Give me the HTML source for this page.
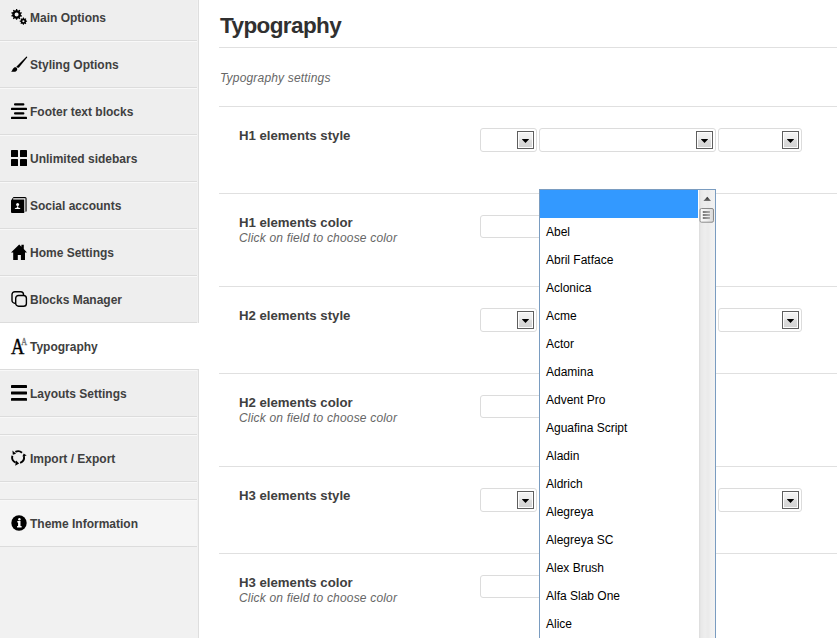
<!DOCTYPE html>
<html><head><meta charset="utf-8">
<style>
*{margin:0;padding:0;box-sizing:border-box}
html,body{width:837px;height:638px;overflow:hidden;background:#fff;font-family:"Liberation Sans",sans-serif;color:#333}
#side{position:absolute;left:0;top:0;width:199px;height:638px;background:#f1f1f1;border-right:1px solid #dedede}
.it{position:absolute;left:0;width:197px;height:47px;background:#eee;border-top:1px solid #f8f8f8;border-bottom:1px solid #dcdcdc}
.it span{position:absolute;left:30px;top:16px;font-size:12px;font-weight:bold;color:#404040;line-height:15px;white-space:nowrap}
.it svg{position:absolute;left:11px;top:14px;overflow:visible}
.it.sel{background:#fff;border-top-color:#fff;width:199px}
.it.hov{background:#f5f5f5}
.band{position:absolute;left:0;width:197px;height:18px;background:#f1f1f1;border-top:1px solid #f8f8f8;border-bottom:1px solid #dcdcdc}
#main{position:absolute;left:219px;top:0;width:618px;height:638px}
h1{position:absolute;left:1px;top:13px;font-size:22.5px;letter-spacing:-0.6px;font-weight:bold;color:#303030;line-height:26px;white-space:nowrap}
.hr{position:absolute;left:0;width:618px;height:1px;background:#e0e0e0}
.desc{position:absolute;left:1px;top:71px;font-size:12px;letter-spacing:0.18px;font-style:italic;color:#666;line-height:15px;white-space:nowrap}
.lab{position:absolute;left:20px;font-size:13.2px;font-weight:bold;color:#404040;line-height:15px;white-space:nowrap}
.sub{position:absolute;left:20px;font-size:12px;letter-spacing:0.18px;font-style:italic;color:#666;line-height:15px;white-space:nowrap}

.sbox{position:absolute;height:24px;border:1px solid #dcdcdc;border-radius:3px;background:#fff}
.btn{position:absolute;right:2px;top:2px;width:17px;height:18px;border:1px solid #5e5e5e;background:#fdfdfd}
.btn:before{content:"";position:absolute;left:1px;top:1px;right:1px;bottom:1px;background:linear-gradient(#f3f3f3 0,#ececec 45%,#dcdcdc 50%,#d4d4d4 100%)}
.btn:after{content:"";position:absolute;left:3.7px;top:6.9px;width:7.6px;height:4.2px;background:#000;clip-path:polygon(0 0,100% 0,50% 100%)}
.inp{position:absolute;height:23px;border:1px solid #dcdcdc;border-radius:3px;background:#fff}
#list{position:absolute;left:539px;top:189px;width:177px;height:460px;border:1px solid #7a9cc0;background:#fff;overflow:hidden}
#list .o{position:absolute;left:6px;font-size:12px;color:#000;line-height:15px;white-space:nowrap}
#list .hi{position:absolute;left:0;top:0;width:158px;height:28px;background:#3399ff}
#sb{position:absolute;left:159px;top:0;width:16px;height:460px;background:linear-gradient(90deg,#dcdcdc 0,#e8e8e8 2px,#eeeeee 6px,#eaeaea 9px,#f0f0f0 12px,#f2f2f2 16px)}
</style></head><body>
<div id="side">
  <div class="it" style="top:-6px"><svg width="16" height="16" viewBox="0 0 16 16"><path fill-rule="evenodd" d="M4.85,1.17 L5.05,-0.07 L6.19,-0.07 L6.38,1.17 L7.48,1.53 L8.37,0.65 L9.29,1.32 L8.72,2.44 L9.39,3.38 L10.63,3.18 L10.98,4.27 L9.86,4.83 L9.86,5.99 L10.97,6.57 L10.62,7.65 L9.38,7.45 L8.70,8.38 L9.26,9.50 L8.34,10.17 L7.46,9.28 L6.35,9.63 L6.15,10.87 L5.01,10.87 L4.82,9.63 L3.72,9.27 L2.83,10.15 L1.91,9.48 L2.48,8.36 L1.81,7.42 L0.57,7.62 L0.22,6.53 L1.34,5.97 L1.34,4.81 L0.23,4.23 L0.58,3.15 L1.82,3.35 L2.50,2.42 L1.94,1.30 L2.86,0.63 L3.74,1.52Z M7.60,5.40 A2.0,2.0 0 1 0 3.60,5.40 A2.0,2.0 0 1 0 7.60,5.40Z M11.79,9.47 L11.94,8.53 L12.89,8.53 L13.03,9.47 L13.90,9.84 L14.67,9.28 L15.34,9.96 L14.78,10.72 L15.13,11.59 L16.07,11.74 L16.07,12.69 L15.13,12.83 L14.76,13.70 L15.32,14.47 L14.64,15.14 L13.88,14.58 L13.01,14.93 L12.86,15.87 L11.91,15.87 L11.77,14.93 L10.90,14.56 L10.13,15.12 L9.46,14.44 L10.02,13.68 L9.67,12.81 L8.73,12.66 L8.73,11.71 L9.67,11.57 L10.04,10.70 L9.48,9.93 L10.16,9.26 L10.92,9.82Z M13.45,12.20 A1.05,1.05 0 1 0 11.35,12.20 A1.05,1.05 0 1 0 13.45,12.20Z"/></svg><span>Main Options</span></div>
  <div class="it" style="top:41px"><svg width="16" height="16" viewBox="0 0 16 16"><path d="M15.5,0.4 Q16.5,0.5 16.1,1.5 L8,11.6 Q6.5,12.3 5.3,10.7 Z"/><path d="M5,11.3 C6.4,12.1 6.8,13.8 5.4,15 C4.2,16 1.6,15.9 0,15.6 C1.2,14.9 1.3,13.5 2.2,12.5 C3,11.5 4.1,10.9 5,11.3 Z"/></svg><span>Styling Options</span></div>
  <div class="it" style="top:88px"><svg width="16" height="16" viewBox="0 0 16 16"><rect x="3" y="0.2" width="10.4" height="2.3" rx="1"/><rect x="0" y="4.8" width="16" height="2.3" rx="0.6"/><rect x="3" y="9.3" width="10.4" height="2.3" rx="1"/><rect x="0" y="13.8" width="16" height="2.3" rx="0.6"/></svg><span>Footer text blocks</span></div>
  <div class="it" style="top:135px"><svg width="16" height="16" viewBox="0 0 16 16"><rect x="0" y="0" width="7" height="7" rx="0.6"/><rect x="9" y="0" width="7" height="7" rx="0.6"/><rect x="0" y="9" width="7" height="7" rx="0.6"/><rect x="9" y="9" width="7" height="7" rx="0.6"/></svg><span>Unlimited sidebars</span></div>
  <div class="it" style="top:182px"><svg width="16" height="16" viewBox="0 0 16 16"><path d="M0,3.4 L2.2,0.3 Q2.4,0 3,0 H14.1 Q15.6,0 15.6,1.5 V14.4 H13.2 V16 H1 Q0,16 0,15 Z"/><path d="M2.2,1.95 H13.85 V14.4" fill="none" stroke="#fafafa" stroke-width="1.2"/><circle cx="6.6" cy="7.6" r="1.5" fill="#fff"/><path d="M6,9.2 H7.2 V10.5 Q9.2,10.7 9.6,12 H3.6 Q4,10.7 6,10.5 Z" fill="#fff"/></svg><span>Social accounts</span></div>
  <div class="it" style="top:229px"><svg width="16" height="16" viewBox="0 0 16 16"><path d="M0,8.6 L8.2,0.6 L10.4,2.8 V0.8 H12.8 V5.1 L16,8.6 H14 V16 H9.9 V11 H6.8 V16 H2.2 V8.6 Z"/></svg><span>Home Settings</span></div>
  <div class="it" style="top:276px"><svg width="16" height="16" viewBox="0 0 16 16"><rect x="1" y="0.7" width="11.5" height="11.5" rx="2.8" fill="none" stroke="#000" stroke-width="1.4"/><rect x="4.7" y="4.5" width="10.7" height="10.7" rx="2.8" fill="#eee" stroke="#000" stroke-width="1.4"/></svg><span>Blocks Manager</span></div>
  <div class="it sel" style="top:323px"><svg width="16" height="16" viewBox="0 0 16 16"><text x="0" y="15.7" font-family="Liberation Serif" font-size="23" transform="scale(0.8,1)" stroke="#000" stroke-width="0.45">A</text><text x="12.9" y="6.8" font-family="Liberation Serif" font-size="10" fill="#666" stroke="#777" stroke-width="0.3" transform="scale(0.8,1)">A</text></svg><span>Typography</span></div>
  <div class="it" style="top:370px"><svg width="16" height="16" viewBox="0 0 16 16"><rect x="0" y="0.1" width="16" height="2.8" rx="0.4"/><rect x="0" y="6.6" width="16" height="2.9" rx="0.4"/><rect x="0" y="13" width="16" height="2.8" rx="0.4"/></svg><span>Layouts Settings</span></div>
  <div class="band" style="top:417px"></div>
  <div class="it" style="top:435px"><svg width="16" height="16" viewBox="0 0 16 16"><g fill="none" stroke="#000" stroke-width="1.9"><path d="M4.40,1.90 A5.95,5.95 0 0 1 11.0,2.71"/><path d="M12.96,6.17 A5.95,5.95 0 0 1 9.14,12.79"/><path d="M4.68,12.64 A5.95,5.95 0 0 1 1.33,5.76"/></g><path d="M1.4,0.4 L1.8,4.7 L5.1,3.8 Z"/><path d="M11.4,6.6 L15.7,5.5 L12.7,3.4 Z"/><path d="M5.1,10.4 L8.1,13.4 L4.2,15.7 Z"/></svg><span>Import / Export</span></div>
  <div class="band" style="top:482px"></div>
  <div class="it hov" style="top:500px"><svg width="16" height="16" viewBox="0 0 16 16"><circle cx="8" cy="8" r="7.7"/><circle cx="8.4" cy="4.3" r="1.2" fill="#fff"/><path d="M6.3,6.1 H9.5 V11 H10.6 V12.5 H6.1 V11 H7.1 V7.4 H6.3 Z" fill="#fff"/></svg><span>Theme Information</span></div>
</div>
<div id="main">
  <h1>Typography</h1>
  <div class="hr" style="top:47px"></div>
  <div class="desc">Typography settings</div>
  <div class="hr" style="top:106px"></div>
  <div class="lab" style="top:128px">H1 elements style</div>
  <div class="hr" style="top:193px"></div>
  <div class="lab" style="top:215px">H1 elements color</div>
  <div class="sub" style="top:231px">Click on field to choose color</div>
  <div class="hr" style="top:286px"></div>
  <div class="lab" style="top:308px">H2 elements style</div>
  <div class="hr" style="top:373px"></div>
  <div class="lab" style="top:395px">H2 elements color</div>
  <div class="sub" style="top:411px">Click on field to choose color</div>
  <div class="hr" style="top:466px"></div>
  <div class="lab" style="top:488px">H3 elements style</div>
  <div class="hr" style="top:553px"></div>
  <div class="lab" style="top:575px">H3 elements color</div>
  <div class="sub" style="top:591px">Click on field to choose color</div>
</div>
<!-- selects row 1 -->
<div class="sbox" style="left:480px;top:128px;width:57px"><div class="btn"></div></div>
<div class="sbox" style="left:539px;top:128px;width:177px"><div class="btn"></div></div>
<div class="sbox" style="left:718px;top:128px;width:84px"><div class="btn"></div></div>
<div class="inp" style="left:480px;top:215px;width:120px"></div>
<div class="sbox" style="left:480px;top:308px;width:57px"><div class="btn"></div></div>
<div class="sbox" style="left:718px;top:308px;width:84px"><div class="btn"></div></div>
<div class="inp" style="left:480px;top:395px;width:120px"></div>
<div class="sbox" style="left:480px;top:488px;width:57px"><div class="btn"></div></div>
<div class="sbox" style="left:718px;top:488px;width:84px"><div class="btn"></div></div>
<div class="inp" style="left:480px;top:575px;width:120px"></div>

<div id="list">
  <div class="hi"></div>
  <div class="o" style="top:35px">Abel</div>
  <div class="o" style="top:63px">Abril Fatface</div>
  <div class="o" style="top:91px">Aclonica</div>
  <div class="o" style="top:119px">Acme</div>
  <div class="o" style="top:147px">Actor</div>
  <div class="o" style="top:175px">Adamina</div>
  <div class="o" style="top:203px">Advent Pro</div>
  <div class="o" style="top:231px">Aguafina Script</div>
  <div class="o" style="top:259px">Aladin</div>
  <div class="o" style="top:287px">Aldrich</div>
  <div class="o" style="top:315px">Alegreya</div>
  <div class="o" style="top:343px">Alegreya SC</div>
  <div class="o" style="top:371px">Alex Brush</div>
  <div class="o" style="top:399px">Alfa Slab One</div>
  <div class="o" style="top:427px">Alice</div>
  <div id="sb"><svg width="16" height="40" style="position:absolute;left:0;top:0">
<defs><linearGradient id="ua" x1="0" y1="0" x2="0" y2="1"><stop offset="0" stop-color="#222"/><stop offset="1" stop-color="#777"/></linearGradient>
<linearGradient id="th" x1="0" y1="0" x2="1" y2="0"><stop offset="0" stop-color="#fafafa"/><stop offset="0.5" stop-color="#f0f0f0"/><stop offset="1" stop-color="#d6d6d6"/></linearGradient></defs>
<path d="M4.4,10.9 L8.3,6.8 L12,10.9 Z" fill="url(#ua)"/>
<rect x="1" y="18.5" width="13.5" height="13.7" rx="1.5" fill="url(#th)" stroke="#8a8a8a" stroke-width="1"/>
<defs><linearGradient id="gr" gradientUnits="userSpaceOnUse" x1="3.8" y1="0" x2="11" y2="0"><stop offset="0" stop-color="#222"/><stop offset="1" stop-color="#888"/></linearGradient></defs><g stroke="url(#gr)" stroke-width="1.2"><path d="M3.8,22 H11"/><path d="M3.8,25 H11"/><path d="M3.8,28 H11"/></g>
</svg></div>
</div>
</body></html>
